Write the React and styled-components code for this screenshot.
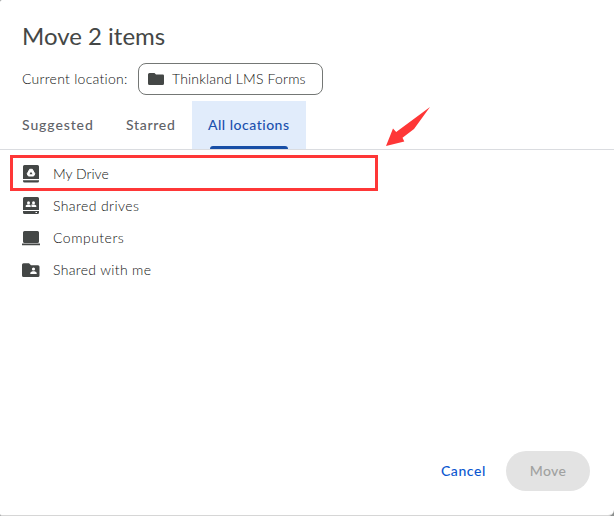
import React from 'react';
import styled, { createGlobalStyle } from 'styled-components';

const Global = createGlobalStyle`
  *, *::before, *::after { box-sizing: border-box; }
  body { margin: 0; background: #8c8f8e; overflow: hidden; }
`;

const Dialog = styled.main`
  position: relative;
  display: flex;
  flex-direction: column;
  width: 614px;
  height: 516px;
  background: #fff;
  border-bottom: 1px solid #d6d6d6;
  border-radius: 2px 0 6px 2px;
  color: #101211;
  font: 300 14px/20px Lato, Roboto, sans-serif;
  white-space: nowrap;
`;

const Title = styled.h1`
  margin: 20px 0 0 22px;
  color: #444746;
  font-size: 24px;
  font-weight: 400;
  line-height: 32px;
  letter-spacing: 0;
`;

const Location = styled.div`
  display: flex;
  align-items: center;
  height: 32px;
  margin: 11px 0 0 22px;
`;

const Label = styled.span`
  width: 116px;
  letter-spacing: ${(p) => p.$spacing}px;
`;

const Chip = styled.div`
  display: flex;
  align-items: center;
  width: 185px;
  height: 32px;
  padding-left: 9px;
  border: 1px solid #747775;
  border-radius: 8px;
  letter-spacing: 0.16px;

  svg { margin-right: 8px; }
`;

const Tabs = styled.nav`
  display: flex;
  height: 49px;
  margin-top: 6px;
  padding-left: 6px;
  border-bottom: 1px solid #dadce0;
`;

const Tab = styled.div`
  display: flex;
  flex-direction: column;
  justify-content: space-between;
  width: ${(p) => p.$width}px;
  padding: 14px 0 0 16px;
  background: ${(p) => (p.$active ? '#e1ecfb' : 'transparent')};
  color: ${(p) => (p.$active ? '#1a50ae' : '#5f6368')};
  font-weight: 500;
  letter-spacing: ${(p) => p.$spacing}px;
`;

const Indicator = styled.span`
  width: 78px;
  height: 3px;
  margin-left: 2px;
  border-radius: 3px 3px 0 0;
  background: #174ea6;
`;

const List = styled.ul`
  margin: 8px 0 0;
  padding: 0;
  list-style: none;
`;

const Item = styled.li`
  display: flex;
  align-items: center;
  height: 32px;
  padding-left: 21px;
  letter-spacing: ${(p) => p.$spacing}px;

  svg { margin-right: 12px; }
`;

const Actions = styled.footer`
  display: flex;
  justify-content: flex-end;
  align-items: center;
  gap: 20px;
  margin: auto 24px 24px 0;
  font-weight: 500;
`;

const Cancel = styled.span`
  color: #0b57d0;
  letter-spacing: 0.6px;
`;

const MoveButton = styled.div`
  width: 84px;
  height: 40px;
  border-radius: 20px;
  background: #e3e3e3;
  color: #a0a1a0;
  line-height: 40px;
  letter-spacing: 0.3px;
  text-align: center;
`;

const Highlight = styled.div`
  position: absolute;
  left: 10px;
  top: 155px;
  width: 368px;
  height: 36px;
  border: 3px solid #fe3737;
`;

const Arrow = styled.svg`
  position: absolute;
  left: 380px;
  top: 100px;
`;

const Glyph = ({ children }) => (
  <svg width="20" height="20" viewBox="0 0 20 20" fill="#444746">{children}</svg>
);

const DriveIcon = () => (
  <Glyph>
    <path d="M3.500 1h13A1.500 1.500 0 0 1 18 2.500V15H2V2.500A1.500 1.500 0 0 1 3.500 1ZM2 16.300h16v.7a1.500 1.500 0 0 1-1.500 1.500h-13A1.500 1.500 0 0 1 2 17Z" />
    <path d="M8.700 5.300h2.600l2.500 4.500-1.200 2.200H7.400L6.200 9.800Z" fill="#fff" stroke="#fff" strokeWidth="1" strokeLinejoin="round" />
    <path d="m10 7.700 1.500 2.500h-3Z" />
  </Glyph>
);

const SharedDriveIcon = () => (
  <Glyph>
    <path d="M3.500 1h13A1.500 1.500 0 0 1 18 2.500V14H2V2.500A1.500 1.500 0 0 1 3.500 1ZM2 15h16v1.500a1.500 1.500 0 0 1-1.500 1.500h-13A1.500 1.500 0 0 1 2 16.500Z" />
    <g fill="#fff">
      <circle cx="7.500" cy="6.700" r="1.500" />
      <circle cx="12.500" cy="6.700" r="1.500" />
      <path d="M4.700 11V10c0-1 1.500-1.500 2.800-1.500s2.200.5 2.200 1.500v1ZM10.500 11v-1c0-.6-.1-.9-.4-1.200.6-.2 1.500-.3 2.400-.3 1.300 0 2.800.5 2.800 1.500v1ZM14.500 16H16v1h-1.500Z" />
    </g>
  </Glyph>
);

const ComputerIcon = () => (
  <Glyph>
    <path d="M3.500 3h13A1.500 1.500 0 0 1 18 4.500v9a1.500 1.500 0 0 1-1.500 1.500h-13A1.500 1.500 0 0 1 2 13.500v-9A1.500 1.500 0 0 1 3.500 3ZM1 15.500h18v1.800H1Z" />
  </Glyph>
);

const SharedFolderIcon = () => (
  <Glyph>
    <path d="M2.500 3.300h5.500l2 2h7a1.500 1.500 0 0 1 1.500 1.500v8.700A1.500 1.500 0 0 1 17 17H2.500A1.500 1.500 0 0 1 1 15.500V4.800a1.500 1.500 0 0 1 1.500-1.500Z" />
    <g fill="#fff">
      <circle cx="12.500" cy="9" r="1.600" />
      <path d="M9.300 14v-1c0-1.200 2-1.800 3.200-1.800s3.200.6 3.200 1.800v1Z" />
    </g>
  </Glyph>
);

const FolderIcon = () => (
  <svg width="16" height="16" viewBox="0 0 16 16" fill="#444746">
    <path d="M1.500 2h5l1.500 1.500h6.500A1.300 1.300 0 0 1 16 4.800v7.700a1.500 1.500 0 0 1-1.500 1.500h-13A1.500 1.500 0 0 1 0 12.500v-9A1.500 1.500 0 0 1 1.500 2Z" />
  </svg>
);

const places = [
  { name: 'My Drive', Icon: DriveIcon, spacing: 0 },
  { name: 'Shared drives', Icon: SharedDriveIcon, spacing: 0.4 },
  { name: 'Computers', Icon: ComputerIcon, spacing: 0.5 },
  { name: 'Shared with me', Icon: SharedFolderIcon, spacing: 0.34 },
];

export default function App() {
  return (
    <>
      <Global />
      <Dialog>
        <Title>Move 2 items</Title>
        <Location>
          <Label $spacing={0.27}>Current location:</Label>
          <Chip><FolderIcon />Thinkland LMS Forms</Chip>
        </Location>
        <Tabs>
          <Tab $width={104} $spacing={0.9}>Suggested</Tab>
          <Tab $width={82} $spacing={0.7}>Starred</Tab>
          <Tab $width={114} $spacing={0.5} $active>All locations<Indicator /></Tab>
        </Tabs>
        <List>
          {places.map(({ name, Icon, spacing }) => (
            <Item key={name} $spacing={spacing}><Icon />{name}</Item>
          ))}
        </List>
        <Actions>
          <Cancel>Cancel</Cancel>
          <MoveButton>Move</MoveButton>
        </Actions>
        <Highlight />
        <Arrow width="54" height="50" viewBox="0 0 54 50">
          <path d="M50 7 34 29 22.500 37.800 24.300 41.500 6 46 13 28.500 16.200 32Z" fill="#fe3737" />
        </Arrow>
      </Dialog>
    </>
  );
}
